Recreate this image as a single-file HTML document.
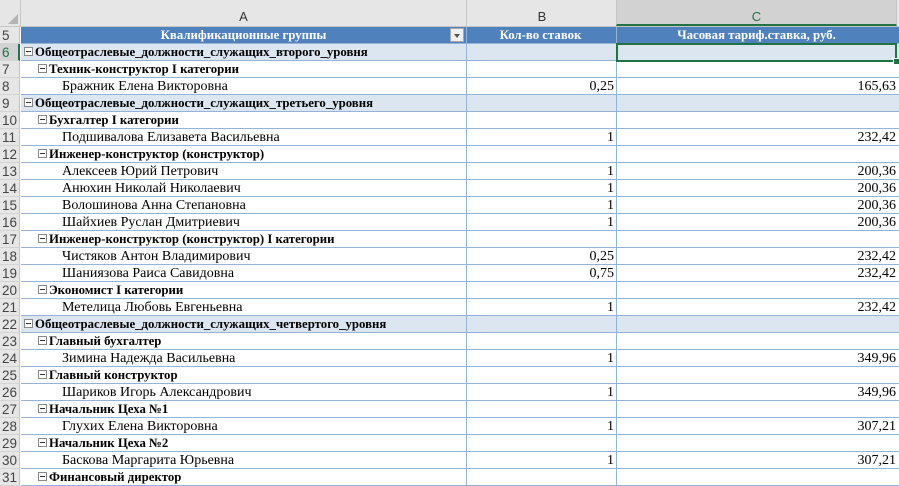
<!DOCTYPE html>
<html><head><meta charset="utf-8"><style>
body{margin:0;width:899px;height:477px;overflow:hidden;background:#fff;font-family:"Liberation Serif",serif;font-size:14px;}
.r{position:absolute;left:0;width:899px;height:17px;}
.rh{position:absolute;left:0;top:0;width:20px;height:17px;background:#e6e6e6;border-right:1px solid #c6c6c6;border-bottom:1px solid #d4d4d4;box-sizing:border-box;font-family:"Liberation Sans",sans-serif;font-size:13.5px;color:#444;padding-left:2px;line-height:17px;}
.c{position:absolute;top:0;height:17px;box-sizing:border-box;border-bottom:1px solid #95b3d7;line-height:17px;white-space:nowrap;overflow:hidden;}
.a{left:21px;width:445px;}
.b{left:466px;width:150px;border-left:1px solid #95b3d7;text-align:right;padding-right:2px;}
.cc{left:616px;width:283px;border-left:1px solid #95b3d7;text-align:right;padding-right:3px;}
.l1 .c{background:#dce6f1;font-weight:bold;font-size:12.8px;}
.l2 .c{font-weight:bold;font-size:12.8px;}
.hd{background:#4f81bd;color:#fff;font-weight:bold;text-align:center;font-size:12.8px;}
.box{display:inline-block;width:9px;height:9px;border:1px solid #888;box-sizing:border-box;position:relative;vertical-align:0px;margin-right:2px;background:#fff;}
.box:after{content:"";position:absolute;left:1px;top:3px;width:5px;height:1px;background:#333;}
</style></head><body>
<div style="position:absolute;left:0;top:0;width:899px;height:27px;background:#e6e6e6;border-bottom:1px solid #c6c6c6;box-sizing:border-box;font-family:'Liberation Sans',sans-serif;font-size:13px;color:#333;">
<div style="position:absolute;left:0;top:0;width:20px;height:26px;border-right:1px solid #c6c6c6;"><div style="position:absolute;right:2px;bottom:2px;width:0;height:0;border-left:10px solid transparent;border-bottom:10px solid #b4b4b4;"></div></div>
<div style="position:absolute;left:21px;width:445px;top:9px;text-align:center;">A</div>
<div style="position:absolute;left:466px;width:150px;top:0;height:26px;border-left:1px solid #c6c6c6;text-align:center;line-height:34px;">B</div>
<div style="position:absolute;left:616px;width:281px;top:0;height:26px;border-left:1px solid #c6c6c6;border-right:1px solid #c6c6c6;background:#d2d2d2;border-bottom:2px solid #217346;box-sizing:border-box;text-align:center;line-height:34px;color:#217346;">C</div>
</div>
<div id="rows"></div>
<div style="position:absolute;left:616px;top:43px;width:281px;height:19px;border:2px solid #217346;box-sizing:border-box;"></div>
<div style="position:absolute;left:893px;top:58px;width:5px;height:5px;background:#217346;border:1px solid #fff;"></div>
<script>
var d=[
[5,'h','Квалификационные группы','Кол-во ставок','Часовая тариф.ставка, руб.'],
[6,1,'Общеотраслевые_должности_служащих_второго_уровня'],
[7,2,'Техник-конструктор I категории'],
[8,3,'Бражник Елена Викторовна','0,25','165,63'],
[9,1,'Общеотраслевые_должности_служащих_третьего_уровня'],
[10,2,'Бухгалтер I категории'],
[11,3,'Подшивалова Елизавета Васильевна','1','232,42'],
[12,2,'Инженер-конструктор (конструктор)'],
[13,3,'Алексеев Юрий Петрович','1','200,36'],
[14,3,'Анюхин Николай Николаевич','1','200,36'],
[15,3,'Волошинова Анна Степановна','1','200,36'],
[16,3,'Шайхиев Руслан Дмитриевич','1','200,36'],
[17,2,'Инженер-конструктор (конструктор) I категории'],
[18,3,'Чистяков Антон Владимирович','0,25','232,42'],
[19,3,'Шаниязова Раиса Савидовна','0,75','232,42'],
[20,2,'Экономист I категории'],
[21,3,'Метелица Любовь Евгеньевна','1','232,42'],
[22,1,'Общеотраслевые_должности_служащих_четвертого_уровня'],
[23,2,'Главный бухгалтер'],
[24,3,'Зимина Надежда Васильевна','1','349,96'],
[25,2,'Главный конструктор'],
[26,3,'Шариков Игорь Александрович','1','349,96'],
[27,2,'Начальник Цеха №1'],
[28,3,'Глухих Елена Викторовна','1','307,21'],
[29,2,'Начальник Цеха №2'],
[30,3,'Баскова Маргарита Юрьевна','1','307,21'],
[31,2,'Финансовый директор']];
var h='';
d.forEach(function(r){
var top=27+(r[0]-5)*17;
var cls=r[1]=='h'?'':'l'+r[1];
h+='<div class="r '+cls+'" style="top:'+top+'px">';
var rs=r[0]==6?'color:#217346;border-right:2px solid #217346;background:#d2d2d2;':'';
h+='<div class="rh" style="'+rs+'">'+r[0]+'</div>';
if(r[1]=='h'){
h+='<div class="c a hd">'+r[2]+'<span style="position:absolute;right:2px;top:1px;width:14px;height:14px;background:#f0f0f0;border:1px solid #aaa;box-sizing:border-box;"><span style="position:absolute;left:3px;top:5px;border-left:3px solid transparent;border-right:3px solid transparent;border-top:4px solid #555;"></span></span></div>';
h+='<div class="c b hd">'+r[3]+'</div>';
h+='<div class="c cc hd">'+r[4]+'</div>';
}else{
var pad=r[1]==1?3:r[1]==2?17:41;
var bx=r[1]<3?'<span class="box"></span>':'';
h+='<div class="c a" style="padding-left:'+pad+'px">'+bx+r[2]+'</div>';
h+='<div class="c b">'+(r[3]||'')+'</div>';
h+='<div class="c cc">'+(r[4]||'')+'</div>';
}
h+='</div>';
});
document.getElementById('rows').innerHTML=h;
</script>
</body></html>
